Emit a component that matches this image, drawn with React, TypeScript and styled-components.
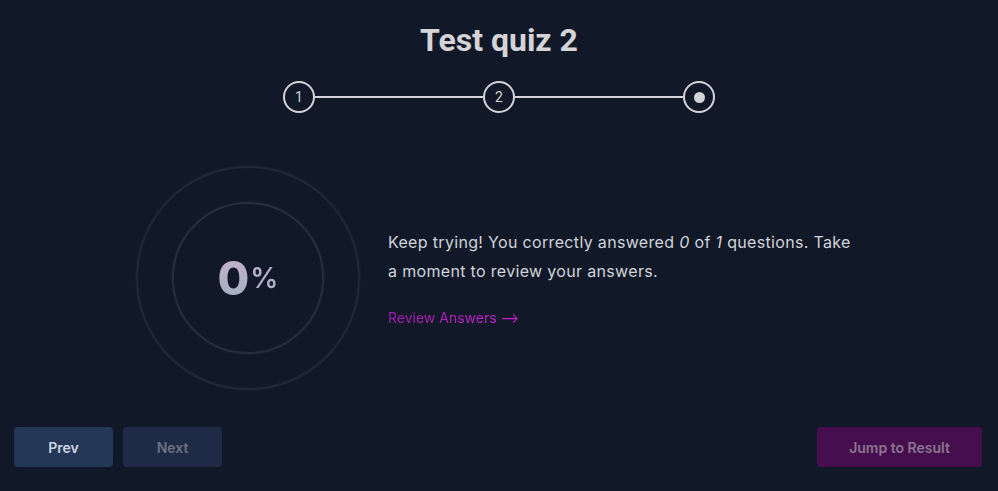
import React from "react";
import styled, { createGlobalStyle } from "styled-components";

const Global = createGlobalStyle`
  html, body { margin: 0; padding: 0; background: #111827; }
  body { font-family: Inter, "Noto Sans", sans-serif; color: #d1d5db; }
  * { box-sizing: border-box; }
`;

const Page = styled.div`
  height: 491px;
  display: flex;
  flex-direction: column;
  background: #111827;
`;

const Title = styled.h1`
  margin: 0;
  padding-top: 20px;
  font-family: Roboto, "Liberation Sans", sans-serif;
  font-size: 32px;
  line-height: 40px;
  font-weight: 700;
  text-align: center;
  color: #d4d4d8;
`;

const Stepper = styled.div`
  margin: 21px auto 0;
  display: flex;
  align-items: center;
`;

const Step = styled.div`
  width: 32px;
  height: 32px;
  border-radius: 50%;
  border: 2px solid #d4d4d8;
  display: flex;
  align-items: center;
  justify-content: center;
  font-family: Roboto, "Liberation Sans", sans-serif;
  font-size: 14px;
  color: #d4d4d8;
`;

const Dot = styled.span`
  width: 11px;
  height: 11px;
  border-radius: 50%;
  background: #d4d4d8;
`;

const Connector = styled.div`
  width: 168px;
  height: 2px;
  background: #d4d4d8;
`;

const Result = styled.div`
  margin-top: 53px;
  display: flex;
  align-items: center;
  justify-content: center;
  gap: 28px;
`;

const OuterRing = styled.div`
  width: 224px;
  height: 224px;
  border-radius: 50%;
  border: 2px solid rgba(55, 65, 81, 0.4);
  box-shadow: 0 0 3px rgba(75, 85, 99, 0.25);
  display: flex;
  align-items: center;
  justify-content: center;
`;

const InnerRing = styled.div`
  width: 152px;
  height: 152px;
  border-radius: 50%;
  border: 2px solid rgba(55, 65, 81, 0.55);
  box-shadow: 0 0 3px rgba(75, 85, 99, 0.25);
  display: flex;
  align-items: center;
  justify-content: center;
`;

const Score = styled.div`
  display: flex;
  align-items: center;
  gap: 1px;
  font-weight: 800;
  background: linear-gradient(to bottom, #c7b0cb, #9eb0c2);
  -webkit-background-clip: text;
  background-clip: text;
  color: transparent;
`;

const Big = styled.span`
  font-size: 46px;
  line-height: 50px;
`;

const Pct = styled.span`
  font-size: 28px;
  line-height: 32px;
  font-weight: 600;
`;

const Info = styled.div`
  width: 474px;
`;

const Message = styled.p`
  margin: 0;
  font-size: 16px;
  line-height: 28.5px;
  letter-spacing: 0.33px;
  color: #d1d5db;
  em { font-style: italic; }
`;

const ReviewLink = styled.a`
  display: inline-block;
  margin-top: 23px;
  font-size: 14px;
  line-height: 20px;
  background: linear-gradient(to right, #a21caf, #d01fd8);
  -webkit-background-clip: text;
  background-clip: text;
  color: transparent;
  cursor: pointer;
`;

const Footer = styled.div`
  margin-top: auto;
  padding: 0 16px 24px 14px;
  display: flex;
  align-items: center;
`;

const Button = styled.button<{ $bg: string; $fg: string; $w: number }>`
  width: ${(p) => p.$w}px;
  height: 40px;
  border: none;
  border-radius: 4px;
  background: ${(p) => p.$bg};
  color: ${(p) => p.$fg};
  font-family: Inter, "Noto Sans", sans-serif;
  font-size: 14px;
  font-weight: 600;
  cursor: pointer;
`;

const Spacer = styled.div`
  flex: 1;
`;

const Gap = styled.div`
  width: 10px;
`;

export default function App() {
  return (
    <Page>
      <Global />
      <Title>Test quiz 2</Title>
      <Stepper>
        <Step>1</Step>
        <Connector />
        <Step>2</Step>
        <Connector />
        <Step>
          <Dot />
        </Step>
      </Stepper>
      <Result>
        <OuterRing>
          <InnerRing>
            <Score>
              <Big>0</Big>
              <Pct>%</Pct>
            </Score>
          </InnerRing>
        </OuterRing>
        <Info>
          <Message>
            Keep trying! You correctly answered <em>0</em> of <em>1</em> questions. Take a moment
            to review your answers.
          </Message>
          <ReviewLink>Review Answers ⟶</ReviewLink>
        </Info>
      </Result>
      <Footer>
        <Button $bg="#243757" $fg="#cbd5e1" $w={99}>Prev</Button>
        <Gap />
        <Button $bg="#1e2a46" $fg="#6b7280" $w={99}>Next</Button>
        <Spacer />
        <Button $bg="#470e4f" $fg="#8a7690" $w={165}>Jump to Result</Button>
      </Footer>
    </Page>
  );
}
